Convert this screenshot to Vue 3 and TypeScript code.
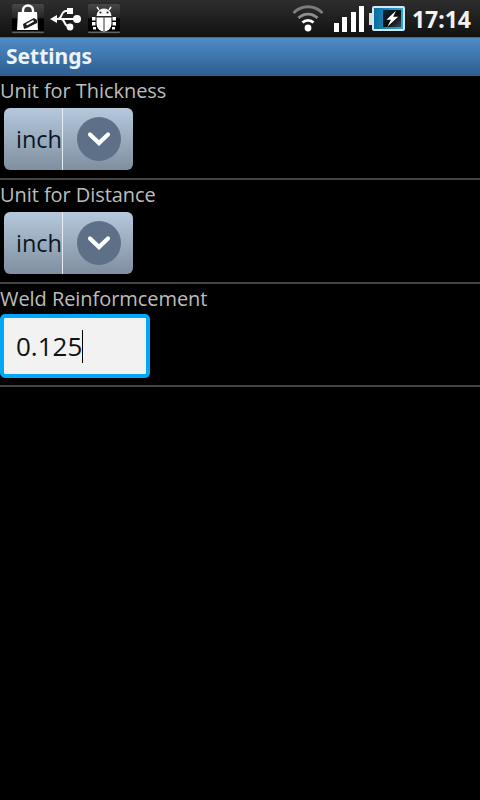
<script setup lang="ts">
const spinners = ['Unit for Thickness', 'Unit for Distance']
</script>

<template>
  <div class="screen">
    <header class="status">
      <div class="notifs">
        <span class="tile">
          <svg width="32" height="30" viewBox="0 0 32 30">
            <path d="M11 9V6.500a5 5 0 0 1 10 0V9" fill="none" stroke="#fff" stroke-width="2.400" />
            <path d="M6 8h19l1 18H5z" fill="#fff" />
            <path d="M11 20l11-6 3 2v3l-10 5-3 1z" fill="#1c1c1c" />
            <path d="M14 20l7-4 1 1.500-7 4z" fill="#fff" />
          </svg>
        </span>
        <svg class="usb" width="32" height="28" viewBox="0 0 32 28">
          <g fill="none" stroke="#fff" stroke-width="2">
            <path d="M4 14h22" />
            <path d="M8 14c4 0 3-8 8-8h4" />
            <path d="M11 14c4 0 3 7 7 7h2" />
          </g>
          <path d="M0 14l7-4v8z" fill="#fff" />
          <circle cx="27" cy="14" r="4" fill="#fff" />
          <rect x="17" y="3" width="6" height="6" fill="#fff" />
          <circle cx="20" cy="22" r="3.400" fill="#fff" />
        </svg>
        <span class="tile">
          <svg width="32" height="30" viewBox="0 0 32 30">
            <path d="M8.500 12a7.500 7.500 0 0 1 15 0z" fill="#fff" />
            <path d="M11 6L9 3M21 6l2-3" stroke="#fff" stroke-width="1.400" />
            <path d="M8.500 13.500h15V20a7.500 7.500 0 0 1-15 0z" fill="#fff" />
            <path d="M16 13.500V27" stroke="#333" stroke-width="1" />
            <path d="M4 13h3.500v3.500H4zM24.500 13H28v3.500h-3.500zM4 18h3.500v3.500H4zM24.500 18H28v3.500h-3.500zM5 23h3v2.500H5zM24 23h3v2.500h-3z" fill="#fff" />
            <circle cx="12.500" cy="8.500" r="1.100" fill="#222" />
            <circle cx="19.500" cy="8.500" r="1.100" fill="#222" />
          </svg>
        </span>
      </div>
      <div class="indicators">
        <svg class="wifi" width="32" height="28" viewBox="0 0 32 28">
          <g fill="none">
            <path d="M1.500 9a20 20 0 0 1 29 0" stroke="#7d7d7d" stroke-width="2.800" />
            <path d="M6.500 14a13.500 13.500 0 0 1 19 0" stroke="#8f8f8f" stroke-width="2.800" />
            <path d="M10.500 18.500a8 8 0 0 1 11 0" stroke="#fff" stroke-width="2.800" />
          </g>
          <circle cx="16" cy="24" r="3.400" fill="#fff" />
        </svg>
        <div class="bars">
          <i class="b1"></i><i class="b2"></i><i class="b3"></i><i class="b4"></i>
        </div>
        <div class="battery">
          <span class="nub"></span>
          <span class="shell">
            <span class="cell">
              <svg width="19" height="19" viewBox="0 0 16 16">
                <path d="M11.500 1L3 9h4L4 15l9.500-8.500H9z" fill="#fff" />
              </svg>
            </span>
          </span>
        </div>
        <span class="clock">17:14</span>
      </div>
    </header>
    <div class="title">Settings</div>

    <section v-for="label in spinners" :key="label" class="row">
      <label class="label">{{ label }}</label>
      <div class="spinner">
        <span class="value">inch</span>
        <span class="arrow-area">
          <span class="circle">
            <svg width="26" height="18" viewBox="0 0 26 18">
              <path d="M4 4.500l9 8.500 9-8.500" fill="none" stroke="#fff" stroke-width="4.200" stroke-linecap="round" />
            </svg>
          </span>
        </span>
      </div>
    </section>

    <section class="row row-edit">
      <label class="label">Weld Reinformcement</label>
      <div class="edit">
        <span class="edit-text">0.125</span><span class="caret"></span>
      </div>
    </section>
  </div>
</template>

<style>
html, body { margin: 0; background: #000; }
</style>

<style scoped>
.screen {
  width: 480px;
  height: 800px;
  background: #000;
  overflow: hidden;
  font-family: "Open Sans", "Noto Sans", sans-serif;
}
.status {
  box-sizing: border-box;
  height: 38px;
  display: flex;
  justify-content: space-between;
  align-items: center;
  padding: 0 9px 0 12px;
  background: linear-gradient(#2e2e2e, #111);
  border-bottom: 1px solid #6b6459;
}
.notifs { display: flex; align-items: center; gap: 6px; }
.tile {
  width: 32px;
  height: 30px;
  display: block;
  background: linear-gradient(#484848 0, #262626 45%, #000 50%, #000 90%, #777 94%, #000 100%);
  border-radius: 2px;
}
.tile svg { display: block; }
.indicators { display: flex; align-items: center; }
.wifi { display: block; margin: -2px 1px 0 0; }
.bars {
  display: flex;
  align-items: flex-end;
  gap: 3.400px;
  height: 26px;
  margin: 0 3px 0 9px;
}
.bars i { display: block; width: 5px; background: #fff; }
.bars .b1 { height: 9px; }
.bars .b2 { height: 15px; }
.bars .b3 { height: 20px; }
.bars .b4 { height: 26px; }
.battery { display: flex; align-items: center; margin-left: 2px; }
.nub { width: 3px; height: 12px; background: #ddd; }
.shell {
  box-sizing: border-box;
  width: 33px;
  height: 25px;
  border: 2px solid #d5e8f2;
  border-radius: 2px;
  background: linear-gradient(90deg, #0a6f9f, #2aa8de);
  display: flex;
  padding: 2px;
  padding-left: 9px;
}
.cell {
  flex: 1;
  background: linear-gradient(135deg, #0b2a3c, #0c0c0c 55%, #3a4a58);
  display: flex;
  align-items: center;
  justify-content: center;
  overflow: hidden;
}
.clock {
  margin-left: 7px;
  color: #f2f2f2;
  font-family: "Noto Sans", sans-serif;
  font-size: 23px;
  font-weight: 700;
  line-height: 30px;
}
.title {
  box-sizing: border-box;
  height: 38px;
  padding-left: 6px;
  background: linear-gradient(#4f8cc6, #2c5d90);
  color: #eef4fa;
  font-family: "Noto Sans", sans-serif;
  font-size: 21px;
  font-weight: 700;
  line-height: 37px;
}
.row {
  box-sizing: border-box;
  height: 104px;
  border-bottom: 2px solid #444;
  padding-top: 1px;
}
.row-edit { height: 103px; }
.label {
  display: block;
  color: #bdbdbd;
  font-size: 20px;
  letter-spacing: -0.06px;
  line-height: 28px;
  padding: 0 0 2px 0;
}
.spinner {
  box-sizing: border-box;
  width: 129px;
  height: 62px;
  margin: 1px 0 0 4px;
  display: flex;
  border-radius: 6px;
  background: linear-gradient(#b6c8dc, #7f8fa0);
}
.value {
  box-sizing: border-box;
  width: 59px;
  border-right: 1px solid #e6edf3;
  padding-left: 12px;
  color: #0c1522;
  font-size: 23.500px;
  line-height: 62px;
}
.arrow-area {
  flex: 1;
  display: flex;
  align-items: center;
  padding-left: 14px;
}
.circle {
  width: 44px;
  height: 44px;
  border-radius: 50%;
  background: #5d7088;
  display: flex;
  align-items: center;
  justify-content: center;
}
.circle svg { display: block; }
.edit {
  box-sizing: border-box;
  width: 150px;
  height: 64px;
  margin-top: -1px;
  border: 4px solid #00a8fa;
  border-radius: 5px;
  background: #f2f2f2;
  display: flex;
  align-items: center;
  padding-left: 12px;
  color: #111;
}
.edit-text { font-size: 26px; line-height: 30px; }
.caret { width: 1px; height: 33px; background: #000; }
</style>
